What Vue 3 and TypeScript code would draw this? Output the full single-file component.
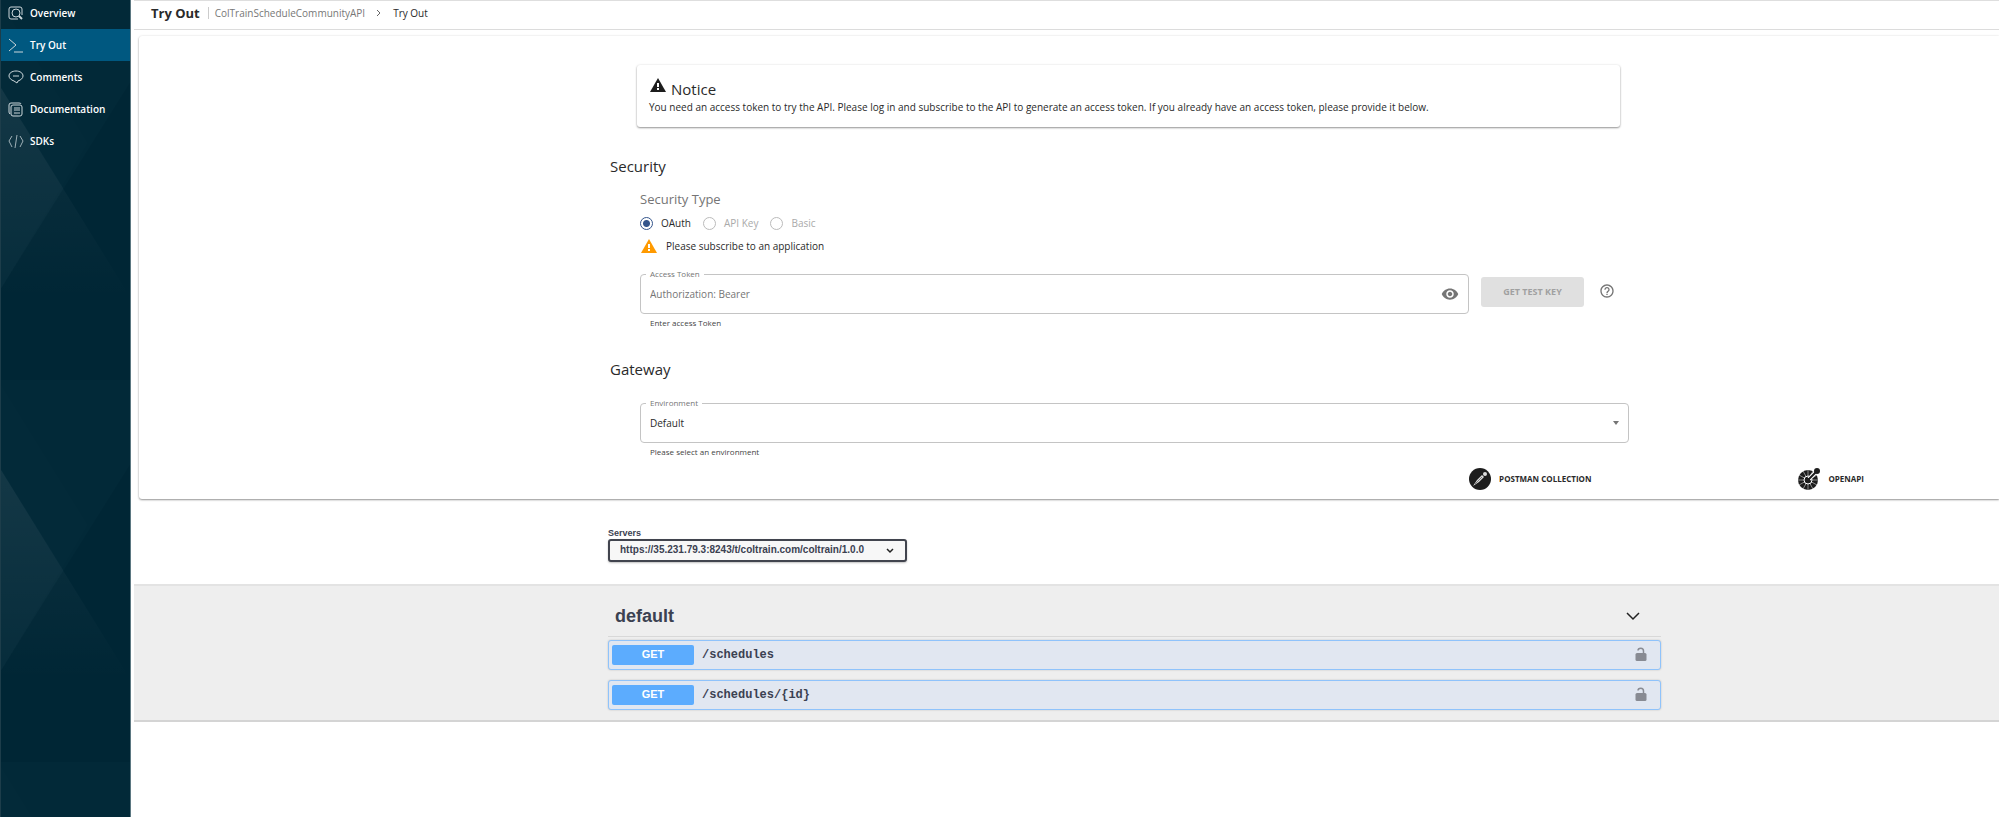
<script setup lang="ts">
import { ref } from 'vue'

const nav = ['Overview', 'Try Out', 'Comments', 'Documentation', 'SDKs']
const security = ref('OAuth')
const types = [
  { name: 'OAuth', disabled: false },
  { name: 'API Key', disabled: true },
  { name: 'Basic', disabled: true },
]
const token = ref('')
const operations = ['/schedules', '/schedules/{id}']
</script>

<template>
  <div class="layout">
    <aside class="sidebar">
      <svg class="facets" aria-hidden="true">
        <defs>
          <linearGradient id="glow" x1="0" y1="0" x2="0" y2="1">
            <stop offset="0" stop-color="#fff" stop-opacity="0.055" />
            <stop offset="1" stop-color="#fff" stop-opacity="0" />
          </linearGradient>
          <pattern id="tile" width="131" height="382" y="-2" patternUnits="userSpaceOnUse">
            <rect width="131" height="382" fill="#002635" />
            <path d="M0 0H131V81L0 290Z" fill="#022938" />
            <path d="M0 6L86 145L0 290Z" fill="#032a39" />
            <path d="M0 90L131 302H0Z" fill="url(#glow)" />
            <path d="M0 90L62 190L0 290Z" fill="#fff" fill-opacity="0.01" />
          </pattern>
        </defs>
        <rect width="100%" height="100%" fill="url(#tile)" />
      </svg>
      <nav class="nav" aria-label="API">
        <a
          v-for="item in nav"
          :key="item"
          href="#"
          class="nav-item"
          :class="{ active: item === 'Try Out' }"
        >
          <svg class="nav-icon" viewBox="0 0 16 16" aria-hidden="true">
            <template v-if="item === 'Overview'">
              <path d="M10 14H3Q1 14 1 12V4Q1 2 3 2H12Q14 2 14 4V10" />
              <circle cx="8" cy="8" r="4" />
              <path d="M11 11L14 14" stroke-width="2" />
            </template>
            <path v-else-if="item === 'Try Out'" d="M1 2L8 8L1 14M6 15H15" />
            <template v-else-if="item === 'Comments'">
              <path d="M8 2C12 2 15 4 15 7C15 9 13 11 10 12L9 14L6 12C3 11 1 9 1 7C1 4 4 2 8 2Z" />
              <path d="M5 7H11" />
            </template>
            <template v-else-if="item === 'Documentation'">
              <path d="M2 13Q1 12 1 11V4Q1 2 3 2H11Q13 2 13 3" />
              <rect x="3" y="4" width="11" height="11" rx="2" />
              <path d="M6 7H12M6 9H12M6 12H12" />
            </template>
            <path v-else d="M4 3L1 8L4 14M12 3L15 8L12 14M9 2L7 15" stroke="#9fb0b7" />
          </svg>
          <span>{{ item }}</span>
        </a>
      </nav>
    </aside>

    <main class="content">
      <header class="topbar">
        <h1>Try Out</h1>
        <nav class="crumbs" aria-label="Breadcrumb">
          <a href="#">ColTrainScheduleCommunityAPI</a>
          <svg width="6" height="8" viewBox="0 0 6 8" aria-hidden="true"><path d="M1 1L4 4L1 7" fill="none" stroke="#666" /></svg>
          <span>Try Out</span>
        </nav>
      </header>

      <section class="console">
        <div class="column">
          <div class="notice" role="note">
            <h2>
              <svg width="18" height="16" viewBox="0 0 18 16" aria-hidden="true">
                <path d="M9 1L17 15H1Z" fill="#1d1d1d" /><path d="M9 6V10M9 11V13" stroke="#fff" stroke-width="2" />
              </svg>
              Notice
            </h2>
            <p>You need an access token to try the API. Please log in and subscribe to the API to generate an access token. If you already have an access token, please provide it below.</p>
          </div>

          <h2 class="heading">Security</h2>
          <div class="group security">
            <fieldset class="radios">
              <legend>Security Type</legend>
              <label v-for="type in types" :key="type.name" :class="{ off: type.disabled }">
                <input v-model="security" type="radio" name="security" :value="type.name" :disabled="type.disabled" />
                {{ type.name }}
              </label>
            </fieldset>
            <p class="warn">
              <svg width="18" height="16" viewBox="0 0 18 16" aria-hidden="true">
                <path d="M9 1L17 15H1Z" fill="#ff9a00" /><path d="M9 6V10M9 11V13" stroke="#fff" stroke-width="2" />
              </svg>
              <span>Please subscribe to an application</span>
            </p>
            <div class="token-row">
              <div class="field token">
                <label for="token">Access Token</label>
                <div class="box">
                  <input id="token" v-model="token" type="text" placeholder="Authorization: Bearer" aria-describedby="token-help" />
                  <button type="button" class="icon-button" aria-label="Toggle token visibility">
                    <svg width="18" height="18" viewBox="0 0 24 24"><path fill="#757575" d="M12 4.500C7 4.500 2.730 7.610 1 12c1.730 4.390 6 7.500 11 7.500s9.270-3.110 11-7.500c-1.730-4.390-6-7.500-11-7.500zM12 17c-2.760 0-5-2.240-5-5s2.240-5 5-5 5 2.240 5 5-2.240 5-5 5zm0-8c-1.660 0-3 1.340-3 3s1.340 3 3 3 3-1.340 3-3-1.340-3-3-3z" /></svg>
                  </button>
                </div>
                <p id="token-help">Enter access Token</p>
              </div>
              <button type="button" class="test-key" disabled>GET TEST KEY</button>
              <button type="button" class="icon-button help" aria-label="Help">
                <svg width="16" height="16" viewBox="0 0 24 24"><path fill="#757575" d="M11 18h2v-2h-2v2zm1-16C6.480 2 2 6.480 2 12s4.480 10 10 10 10-4.480 10-10S17.520 2 12 2zm0 18c-4.410 0-8-3.590-8-8s3.590-8 8-8 8 3.590 8 8-3.590 8-8 8zm0-14c-2.210 0-4 1.790-4 4h2c0-1.100.9-2 2-2s2 .9 2 2c0 2-3 1.750-3 5h2c0-2.250 3-2.500 3-5 0-2.210-1.790-4-4-4z" /></svg>
              </button>
            </div>
          </div>

          <h2 class="heading">Gateway</h2>
          <div class="group gateway">
            <div class="field">
              <label for="environment">Environment</label>
              <div class="box">
                <select id="environment" aria-describedby="environment-help"><option>Default</option></select>
                <svg width="6" height="4" viewBox="0 0 6 4" aria-hidden="true"><path d="M0 0H6L3 4Z" fill="#757575" /></svg>
              </div>
              <p id="environment-help">Please select an environment</p>
            </div>
          </div>
        </div>

        <div class="downloads">
          <button type="button">
            <svg width="24" height="24" viewBox="0 0 24 24" aria-hidden="true">
              <circle cx="12" cy="12" r="11" fill="#1d1d1d" />
              <path d="M5 19L9 13L14 8L16 10L11 15Z" fill="#ddd" />
              <circle cx="17" cy="7" r="2" fill="#ddd" />
              <path d="M7 17L14 10" stroke="#1d1d1d" stroke-width="0.500" />
            </svg>
            POSTMAN COLLECTION
          </button>
          <button type="button">
            <svg width="24" height="24" viewBox="0 0 24 24" aria-hidden="true">
              <circle cx="11" cy="13" r="10" fill="#1d1d1d" />
              <path d="M11 3V23M1 13H21M6 4L16 22M2 8L20 18M2 18L20 8M6 22L16 4" stroke="#fff" stroke-width="0.500" />
              <circle cx="11" cy="13" r="4" fill="#1d1d1d" stroke="#fff" />
              <path d="M12 12L20 4" stroke="#fff" stroke-width="4" />
              <path d="M11 13L20 4" stroke="#1d1d1d" stroke-width="2" />
              <circle cx="11" cy="13" r="2" fill="#1d1d1d" />
              <circle cx="20" cy="4" r="3" fill="#1d1d1d" />
            </svg>
            OPENAPI
          </button>
        </div>
      </section>

      <section class="servers">
        <div class="column">
          <label for="server">Servers</label>
          <div class="server-box">
            <select id="server"><option>https://35.231.79.3:8243/t/coltrain.com/coltrain/1.0.0</option></select>
            <svg class="caret" width="8" height="6" viewBox="0 0 8 6" aria-hidden="true"><path d="M1 1L4 4L7 1" fill="none" stroke="#222" stroke-width="1.500" /></svg>
          </div>
        </div>
      </section>

      <section class="operations">
        <div class="column">
          <h3>
            default
            <button type="button" class="icon-button" aria-label="Collapse default">
              <svg width="14" height="9" viewBox="0 0 14 9"><path d="M1 1L7 7L13 1" fill="none" stroke="#222" stroke-width="1.500" /></svg>
            </button>
          </h3>
          <div v-for="path in operations" :key="path" class="operation">
            <span class="method">GET</span>
            <a href="#" class="path">{{ path }}</a>
            <button type="button" class="icon-button" aria-label="Authorize">
              <svg width="12" height="16" viewBox="0 0 12 16">
                <rect x="0.500" y="6" width="11" height="8" rx="1.500" fill="#888b93" />
                <path d="M3 3.500C3 0.500 8.500 0 8.500 4V7" fill="none" stroke="#888b93" stroke-width="1.500" />
              </svg>
            </button>
          </div>
        </div>
      </section>
    </main>
  </div>
</template>

<style>
body { margin: 0; background: #fff; }
</style>

<style scoped>
* { box-sizing: border-box; }
.layout {
  display: flex;
  min-height: 100vh;
  overflow: hidden;
  font: 10px/16px "Open Sans", "Noto Sans", sans-serif;
  color: #2a2a2a;
}
h1, h2, h3, p { margin: 0; font-weight: 400; }
a { color: inherit; text-decoration: none; }
button, input, select { font: inherit; color: inherit; margin: 0; }
svg { display: block; flex: none; }
.icon-button { padding: 0; border: 0; background: none; flex: none; }

.sidebar {
  position: relative;
  flex: none;
  width: 131px;
  border-right: 1px solid #5b7781;
  border-left: 1px solid #1d3d4a;
  background: #002635;
}
.facets { position: absolute; inset: 0; width: 100%; height: 100%; }
.nav { position: relative; margin-top: -3px; }
.nav-item {
  display: flex;
  align-items: center;
  gap: 6px;
  height: 32px;
  padding-left: 7px;
  color: #fff;
  font-weight: 600;
}
.nav-item.active { background: #005880; }
.nav-icon { width: 16px; height: 16px; fill: none; stroke: #ccd7db; stroke-width: 1; }

.content { flex: 1; min-width: 0; padding-left: 3px; }
.topbar {
  display: flex;
  align-items: center;
  height: 30px;
  padding: 0 17px 4px;
  border-top: 1px solid #dedede;
  border-bottom: 1px solid #dcdcdc;
}
.topbar h1 { font-size: 13px; font-weight: 700; padding-right: 8px; }
.crumbs { display: flex; align-items: center; gap: 11px; padding-left: 6px; border-left: 1px solid #ccc; height: 12px; }
.crumbs a { color: #777; }

.column { grid-column: 2; min-width: 0; }
.console, .servers, .operations { display: grid; }
.console {
  grid-template-columns: 468fr 1053fr 338fr;
  margin: 6px 0 0 5px;
  padding: 29px 0 8px 1px;
  border-radius: 3px 0 0 3px;
  box-shadow: 0 1px 2px rgba(0, 0, 0, 0.4), 0 0 3px rgba(0, 0, 0, 0.08);
}
.notice {
  margin: 0 41px 0 29px;
  padding: 12px 12px 13px;
  border-radius: 3px;
  box-shadow: 0 1px 2px rgba(0, 0, 0, 0.4), 0 0 3px rgba(0, 0, 0, 0.08);
}
.notice h2 { display: flex; gap: 4px; font-size: 15px; line-height: 24px; }
.notice p { line-height: 13px; }
.heading { margin: 27px 0 0 2px; font-size: 15px; line-height: 24px; }
.group { margin-left: 32px; }
.security { padding-top: 13px; }
.radios { display: flex; align-items: center; gap: 12px; margin: 0; padding: 0; border: 0; }
.radios legend { padding: 0; margin: 0 0 8px; font-size: 13px; line-height: 16px; color: #757575; }
.radios label { display: flex; align-items: center; gap: 8px; }
.radios .off { color: #aaa; }
.radios input {
  appearance: none;
  width: 13px;
  height: 13px;
  border: 1px solid #bbb;
  border-radius: 50%;
}
.radios input:checked { border-color: #34558b; background: radial-gradient(circle, #34558b 3px, transparent 4px); }
.warn { display: flex; gap: 8px; margin-top: 7px; }
.token-row { display: flex; margin-top: 20px; }
.field { position: relative; flex: 1; }
.field > label {
  position: absolute;
  top: -8px;
  left: 6px;
  padding: 0 4px;
  background: #fff;
  color: #757575;
  font-size: 8px;
}
.box { display: flex; align-items: center; height: 40px; border: 1px solid #c4c4c4; border-radius: 4px; padding: 0 9px; }
.box input, .box select {
  flex: 1;
  min-width: 0;
  padding: 0;
  border: 0;
  outline: 0;
  background: none;
  appearance: none;
}
.box input::placeholder { color: #757575; opacity: 1; }
.field p { padding: 2px 10px 0; color: #444; font-size: 8px; line-height: 14px; }
.token { flex: 0 0 829px; }
.test-key {
  width: 103px;
  height: 30px;
  margin: 3px 15px 0 12px;
  padding: 0;
  border: 0;
  border-radius: 3px;
  background: #e0e0e0;
  color: #a0a0a0;
  font-size: 9px;
  font-weight: 700;
}
.help { align-self: flex-start; margin-top: 9px; }
.gateway { margin-right: 32px; padding-top: 22px; }
.downloads { grid-column: 1 / -1; display: flex; justify-content: flex-end; gap: 206px; margin-top: 8px; padding-right: 135px; }
.downloads button { display: flex; align-items: center; gap: 7px; padding: 0; border: 0; background: none; font-size: 8px; font-weight: 700; }

.servers, .operations { grid-template-columns: 474fr 1053fr 338fr; color: #3b4151; font-family: "Liberation Sans", Arial, sans-serif; }
.servers { padding: 28px 0 22px; }
.servers label { display: block; font-size: 9px; line-height: 12px; font-weight: 700; }
.server-box { position: relative; width: fit-content; }
.server-box select {
  appearance: none;
  height: 23px;
  width: 299px;
  padding: 0 30px 2px 10px;
  border: 2px solid #41444e;
  border-radius: 3px;
  background: #f7f7f7;
  box-shadow: 0 1px 2px rgba(0, 0, 0, 0.25);
  font-size: 10px;
  font-weight: 700;
}
.server-box .caret { position: absolute; right: 13px; top: 9px; }
.operations {
  padding: 12px 0 10px;
  background: #eee;
  border-top: 2px solid #e3e3e3;
  border-bottom: 2px solid #d4d4d4;
}
.operations h3 {
  display: flex;
  align-items: center;
  justify-content: space-between;
  height: 39px;
  margin-bottom: 3px;
  padding: 0 21px 2px 7px;
  border-bottom: 1px solid #d8d8d8;
  font-size: 18px;
  font-weight: 700;
}
.operation {
  display: flex;
  align-items: center;
  height: 30px;
  margin-bottom: 10px;
  padding: 0 13px 0 3px;
  border: 1px solid #8fc3fb;
  border-radius: 3px;
  background: #e1e7f1;
  box-shadow: 0 0 2px rgba(0, 0, 0, 0.2);
}
.operation:last-child { margin-bottom: 0; }
.method {
  width: 82px;
  height: 20px;
  border-radius: 2px;
  background: #5cacfe;
  color: #fff;
  font-size: 11px;
  line-height: 18px;
  font-weight: 700;
  text-align: center;
}
.path { flex: 1; padding-left: 8px; font: 700 12px/16px "Liberation Mono", "Courier New", monospace; }
</style>
